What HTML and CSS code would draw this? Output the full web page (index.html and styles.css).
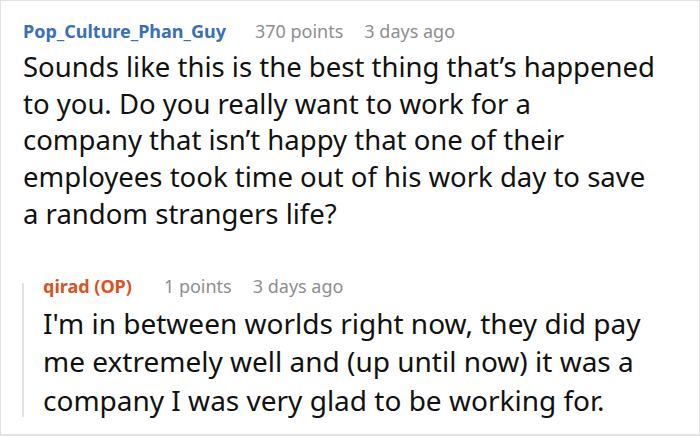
FILE: index.html
```html
<!DOCTYPE html>
<html>
<head>
<meta charset="utf-8">
<link rel="stylesheet" href="styles.css">
</head>
<body>
<div class="frame">
  <div class="comment">
    <div class="meta">
      <span class="user">Pop_Culture_Phan_Guy</span>
      <span class="info">370 points</span>
      <span class="info">3 days ago</span>
    </div>
    <p class="body">Sounds like this is the best thing that’s happened<br>to you. Do you really want to work for a<br>company that isn’t happy that one of their<br>employees took time out of his work day to save<br>a random strangers life?</p>
    <div class="reply">
      <div class="meta">
        <span class="user op">qirad (OP)</span>
        <span class="info">1 points</span>
        <span class="info">3 days ago</span>
      </div>
      <div class="reply-row">
        <div class="thread-line"></div>
        <p class="body reply-body">I'm in between worlds right now, they did pay me extremely well and (up until now) it was a company I was very glad to be working for.</p>
      </div>
    </div>
  </div>
</div>
</body>
</html>
```

FILE: styles.css
```css
html, body {
  margin: 0;
  padding: 0;
  background: #fff;
}
.frame {
  width: 700px;
  height: 436px;
  box-sizing: border-box;
  border: 1px solid #e3e3e3;
  border-bottom-width: 2px;
  overflow: hidden;
  font-family: "Noto Sans", "Open Sans", sans-serif;
}
.comment {
  padding: 16px 22px 0 21px;
}
.meta {
  display: flex;
  gap: 21px;
  align-items: baseline;
  font-size: 18px;
  line-height: 28px;
  padding-left: 1px;
}
.user {
  color: #3a6fb8;
  font-weight: 700;
  margin-right: 8px;
}
.user.op {
  color: #d9531f;
  margin-right: 11px;
}
.info {
  color: #8e8e8e;
}
.body {
  margin: 4px 0 0 1px;
  font-size: 27.5px;
  line-height: 36.7px;
  color: #111;
}
.reply {
  margin-top: 39px;
}
.reply .meta {
  padding-left: 21px;
}
.reply-row {
  display: flex;
  margin-top: -17px;
}
.thread-line {
  width: 2px;
  flex: none;
  background: #e2e2e2;
  margin-bottom: 2px;
}
.reply-body {
  font-size: 28px;
  line-height: 38.5px;
  margin: 21px 0 0 19px;
}
```
